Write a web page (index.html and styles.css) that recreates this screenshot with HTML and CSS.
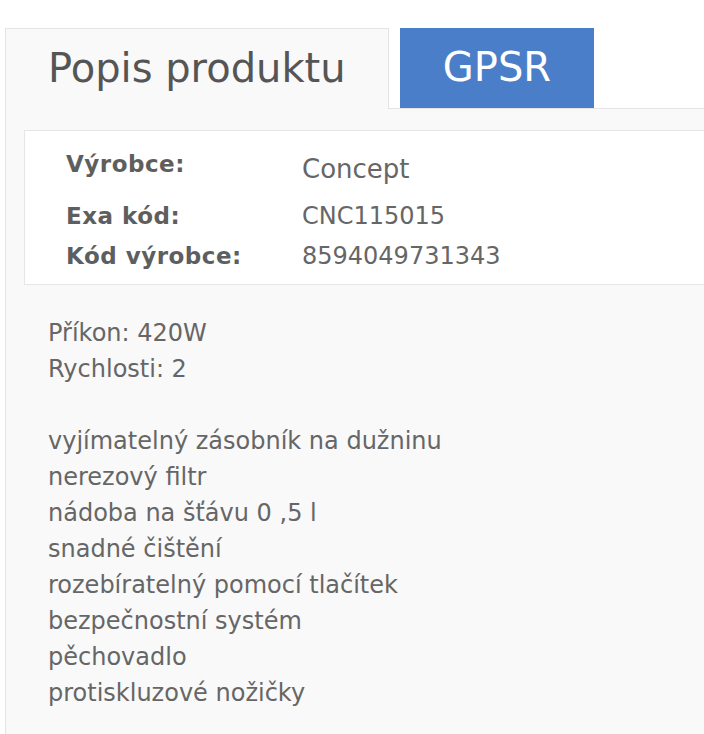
FILE: index.html
```html
<!DOCTYPE html>
<html lang="cs">
<head>
<meta charset="utf-8">
<title>Popis produktu</title>
<link rel="stylesheet" href="styles.css">
</head>
<body>
<div class="tabs">
  <div class="tab tab-active">Popis produktu</div>
  <div class="tab tab-gpsr">GPSR</div>
</div>
<div class="panel">
  <div class="params">
    <div class="label first">Výrobce:</div>
    <div class="value first">Concept</div>
    <div class="label second">Exa kód:</div>
    <div class="value second">CNC115015</div>
    <div class="label">Kód výrobce:</div>
    <div class="value">8594049731343</div>
  </div>
  <div class="desc">
    <div>Příkon: 420W</div>
    <div>Rychlosti: 2</div>
    <div class="blank">&nbsp;</div>
    <div>vyjímatelný zásobník na dužninu</div>
    <div>nerezový filtr</div>
    <div>nádoba na šťávu 0 ,5 l</div>
    <div>snadné čištění</div>
    <div>rozebíratelný pomocí tlačítek</div>
    <div>bezpečnostní systém</div>
    <div>pěchovadlo</div>
    <div>protiskluzové nožičky</div>
  </div>
</div>
</body>
</html>
```

FILE: styles.css
```css
html, body {
  margin: 0;
  padding: 0;
  background: #ffffff;
  font-family: "DejaVu Sans", Verdana, sans-serif;
  color: #666666;
  overflow: hidden;
}

.tabs {
  display: flex;
  align-items: flex-start;
  padding-top: 28px;
  padding-left: 5px;
  position: relative;
  z-index: 2;
}

.tab {
  box-sizing: border-box;
  height: 81px;
  font-size: 40px;
  line-height: 78px;
}

.tab-active {
  width: 384px;
  border: 1px solid #e4e4e4;
  border-bottom: none;
  background: #f9f9f9;
  color: #555555;
  padding-left: 42px;
  margin-bottom: -1px;
}

.tab-gpsr {
  width: 194px;
  height: 80px;
  margin-left: 11px;
  background: #4a7ec8;
  color: #ffffff;
  text-align: center;
}

.panel {
  margin-left: 5px;
  border-left: 1px solid #e4e4e4;
  border-top: 1px solid #e4e4e4;
  background: #f9f9f9;
  padding: 21px 0 40px 0;
}

.params {
  margin-left: 18px;
  background: #ffffff;
  border: 1px solid #e6e6e6;
  border-right: none;
  padding: 18px 0 7px 41px;
  display: grid;
  grid-template-columns: 236px 1fr;
  align-items: start;
}

.label {
  font-weight: bold;
  font-size: 23px;
  letter-spacing: 0.5px;
  line-height: 41px;
  color: #5e5e5e;
}

.value {
  font-size: 24px;
  line-height: 41px;
  color: #666666;
}

.label.first {
  line-height: 30px;
}

.value.first {
  font-size: 26px;
  line-height: 40px;
  padding-bottom: 7px;
}

.label.second,
.value.second {
  line-height: 40px;
}

.desc {
  padding-left: 42px;
  margin-top: 30px;
  font-size: 24px;
  line-height: 36px;
  color: #666666;
}
```
